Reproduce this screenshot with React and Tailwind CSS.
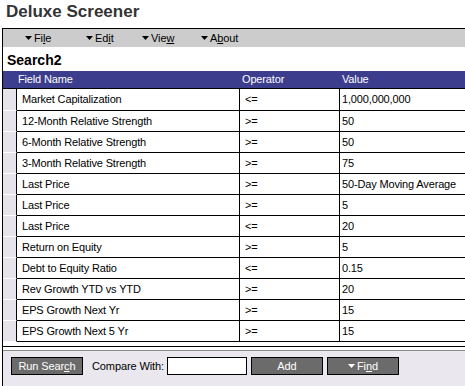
import React from "react";

const rows = [
  ["Market Capitalization", "<=", "1,000,000,000"],
  ["12-Month Relative Strength", ">=", "50"],
  ["6-Month Relative Strength", ">=", "50"],
  ["3-Month Relative Strength", ">=", "75"],
  ["Last Price", ">=", "50-Day Moving Average"],
  ["Last Price", ">=", "5"],
  ["Last Price", "<=", "20"],
  ["Return on Equity", ">=", "5"],
  ["Debt to Equity Ratio", "<=", "0.15"],
  ["Rev Growth YTD vs YTD", ">=", "20"],
  ["EPS Growth Next Yr", ">=", "15"],
  ["EPS Growth Next 5 Yr", ">=", "15"],
];

function Tri({ color = "black" }) {
  return (
    <svg width="7" height="4" viewBox="0 0 7 4" className="shrink-0">
      <path d="M0 0H7L3.5 4Z" fill={color} />
    </svg>
  );
}

function MenuItem({ pre, u, post, w }) {
  return (
    <div className={`flex items-center gap-[2px] ${w}`}>
      <Tri />
      <span>
        {pre}
        <span className="underline">{u}</span>
        {post}
      </span>
    </div>
  );
}

export default function App() {
  return (
    <div className="w-[465px] h-[386px] bg-white overflow-hidden font-['Liberation_Sans',Arial,sans-serif] text-black">
      <div className="h-[28px] pt-[2px] pl-[6px] text-[17px] leading-[20px] font-bold text-[#333333]">
        Deluxe Screener
      </div>
      <div className="ml-[2px] h-[358px] border-l border-t border-black flex flex-col">
        <div className="h-[18px] bg-[#cccccc] flex items-center pl-[22px] text-[11px] tracking-[-0.1px] shrink-0">
          <MenuItem pre="Fi" u="l" post="e" w="w-[61px]" />
          <MenuItem pre="Ed" u="i" post="t" w="w-[56px]" />
          <MenuItem pre="Vie" u="w" post="" w="w-[59px]" />
          <MenuItem pre="A" u="b" post="out" w="" />
        </div>
        <div className="h-[24px] pt-[5px] pl-[4px] text-[14px] leading-[16px] font-bold shrink-0">
          Search2
        </div>
        <div className="h-[18px] bg-[#3c3d8d] border-b border-black flex items-center text-white text-[11px] tracking-[-0.15px] shrink-0">
          <div className="w-[237px] pl-[15px]">Field Name</div>
          <div className="w-[100px] pl-[2px]">Operator</div>
          <div className="flex-1 pl-[2px]">Value</div>
        </div>
        {rows.map((r, i) => (
          <div
            key={i}
            className={`flex text-[11px] tracking-[-0.15px] shrink-0 ${i === 0 ? "h-[22px]" : "h-[21px]"}`}
          >
            <div className="w-[14px] bg-[#e6e4ea] border-r border-black border-b border-b-white" />
            <div className="w-[223px] pl-[5px] flex items-center border-r border-b border-black whitespace-nowrap overflow-hidden">
              {r[0]}
            </div>
            <div className="w-[100px] pl-[5px] flex items-center border-r border-b border-black">
              {r[1]}
            </div>
            <div className="flex-1 pl-[2px] flex items-center border-b border-black whitespace-nowrap overflow-hidden">
              {r[2]}
            </div>
          </div>
        ))}
        <div className="h-[4px] shrink-0" />
        <div className="h-[1px] bg-black shrink-0" />
        <div className="h-[3px] shrink-0" />
        <div className="h-[1px] bg-[#8c8c8c] shrink-0" />
        <div className="flex-1 bg-[#eae8ee] pt-[6px]">
          <div className="flex items-center h-[18px] text-[11px] tracking-[-0.1px]">
            <div className="ml-[8px] w-[72px] h-[18px] bg-[#6b6b6b] border border-black text-white flex items-center justify-center">
              <span>
                Run Sear<span className="underline">c</span>h
              </span>
            </div>
            <div className="ml-[9px] w-[75px]">Compare With:</div>
            <div className="w-[80px] h-[18px] bg-white border border-black" />
            <div className="ml-[4px] w-[72px] h-[18px] bg-[#6b6b6b] border border-black text-white flex items-center justify-center">
              Add
            </div>
            <div className="ml-[4px] w-[72px] h-[18px] bg-[#6b6b6b] border border-black text-white flex items-center justify-center gap-[2px]">
              <Tri color="white" />
              <span>
                Fi<span className="underline">n</span>d
              </span>
            </div>
          </div>
        </div>
      </div>
    </div>
  );
}
